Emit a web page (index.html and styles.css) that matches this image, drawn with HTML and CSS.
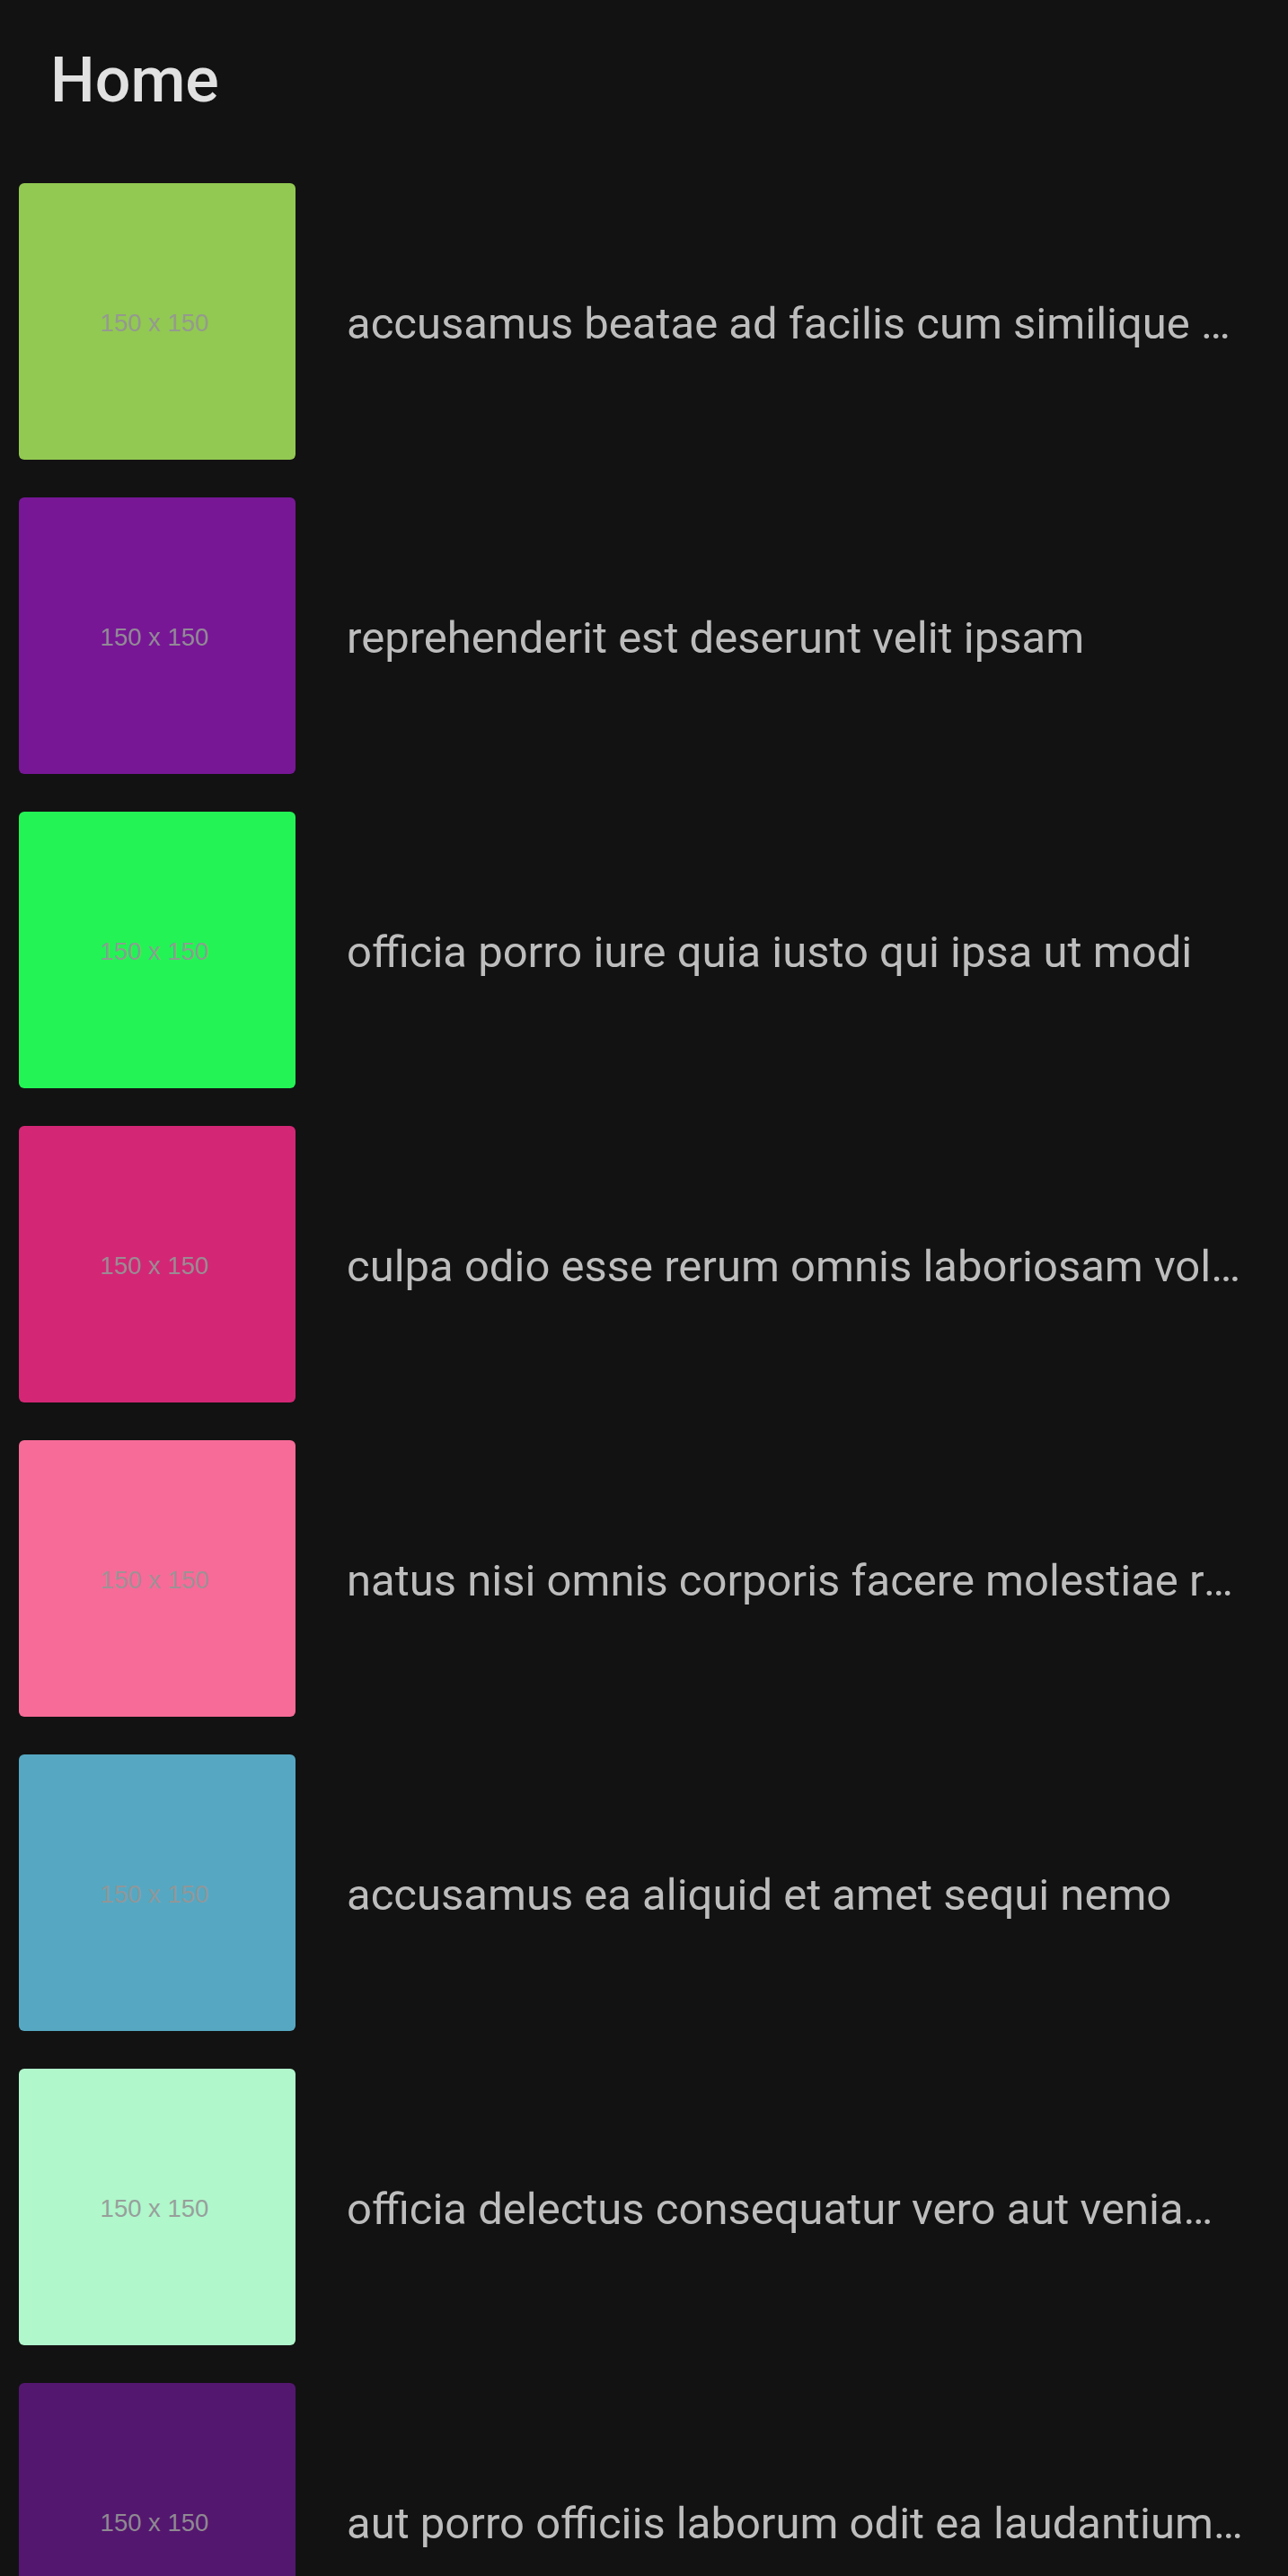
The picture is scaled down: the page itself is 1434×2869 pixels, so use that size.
FILE: index.html
```html
<!DOCTYPE html>
<html lang="en">
<head>
<meta charset="utf-8">
<title>Home</title>
<link rel="stylesheet" href="styles.css">
</head>
<body>
<header class="app-bar">
  <h1 class="title">Home</h1>
</header>
<main class="list">
  <div class="row">
    <div class="thumb c1"><span class="ph">150 x 150</span></div>
    <p class="label">accusamus beatae ad facilis cum similique qui sunt</p>
  </div>
  <div class="row">
    <div class="thumb c2"><span class="ph">150 x 150</span></div>
    <p class="label">reprehenderit est deserunt velit ipsam</p>
  </div>
  <div class="row">
    <div class="thumb c3"><span class="ph">150 x 150</span></div>
    <p class="label">officia porro iure quia iusto qui ipsa ut modi</p>
  </div>
  <div class="row">
    <div class="thumb c4"><span class="ph">150 x 150</span></div>
    <p class="label">culpa odio esse rerum omnis laboriosam voluptate repudiandae</p>
  </div>
  <div class="row">
    <div class="thumb c5"><span class="ph">150 x 150</span></div>
    <p class="label">natus nisi omnis corporis facere molestiae rerum in</p>
  </div>
  <div class="row">
    <div class="thumb c6"><span class="ph">150 x 150</span></div>
    <p class="label">accusamus ea aliquid et amet sequi nemo</p>
  </div>
  <div class="row">
    <div class="thumb c7"><span class="ph">150 x 150</span></div>
    <p class="label">officia delectus consequatur vero aut veniam explicabo molestias</p>
  </div>
  <div class="row">
    <div class="thumb c8"><span class="ph">150 x 150</span></div>
    <p class="label">aut porro officiis laborum odit ea laudantium corporis</p>
  </div>
</main>
</body>
</html>
```

FILE: styles.css
```css
html, body {
  margin: 0;
  padding: 0;
  background: #121212;
}

body {
  font-family: Roboto, "Noto Sans", sans-serif;
  height: 2869px;
  overflow: hidden;
}

.app-bar {
  padding: 48px 0 0 56px;
}

.title {
  margin: 0;
  font-size: 70px;
  font-weight: 500;
  line-height: normal;
  color: #e1e1e1;
}

.list {
  display: flex;
  flex-direction: column;
  gap: 42px;
  padding: 74px 0 0 21px;
}

.row {
  display: flex;
  align-items: center;
  gap: 57px;
}

.thumb {
  flex: 0 0 308px;
  height: 308px;
  border-radius: 6px;
  display: flex;
  align-items: center;
  justify-content: center;
}

.ph {
  padding: 4px 6px 0 0;
  font-family: "Liberation Sans", Arial, sans-serif;
  font-size: 27.5px;
  color: #969696;
  opacity: 0.9;
}

.label {
  margin: 0;
  padding-top: 5px;
  width: 1000px;
  font-size: 49px;
  line-height: normal;
  color: #bdbdbd;
  white-space: nowrap;
  overflow: hidden;
  text-overflow: ellipsis;
}

.c1 { background: #92c952; }
.c2 { background: #771796; }
.c3 { background: #24f355; }
.c4 { background: #d32776; }
.c5 { background: #f66b97; }
.c6 { background: #56a8c2; }
.c7 { background: #b0f7cc; }
.c8 { background: #54176f; }
```
